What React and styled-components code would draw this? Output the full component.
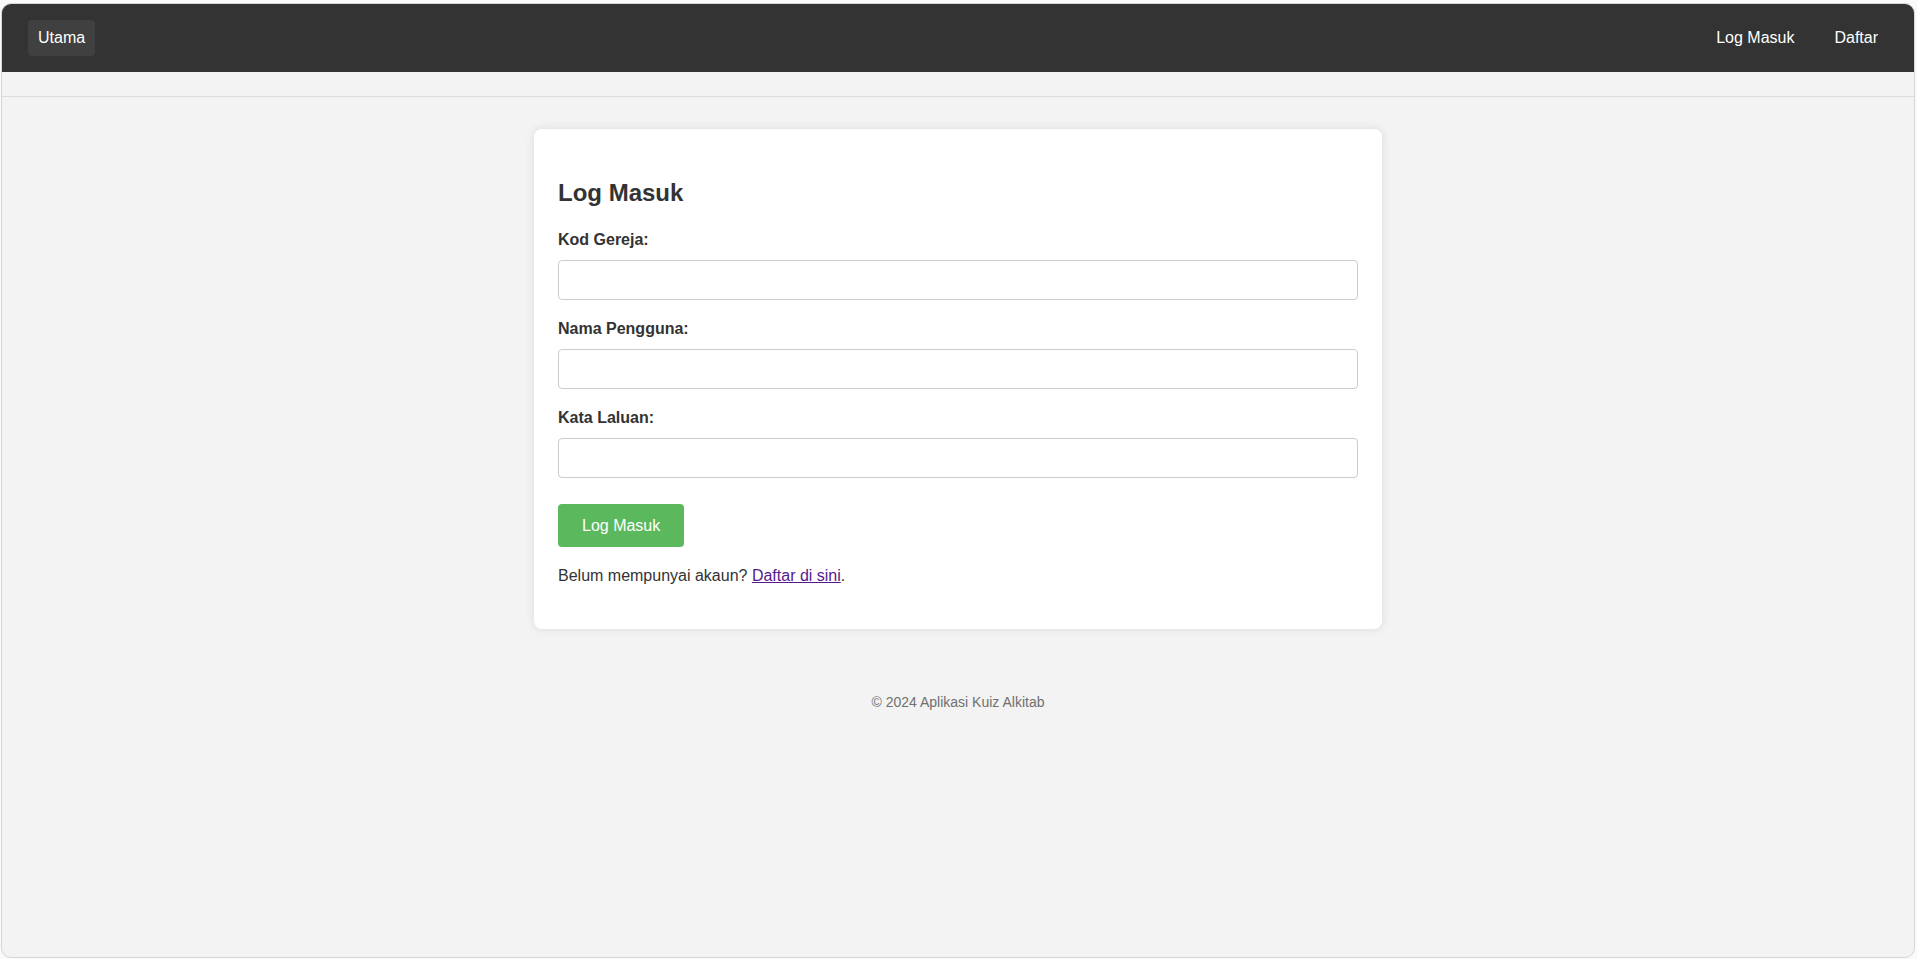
import styled, { createGlobalStyle } from 'styled-components';

const GlobalStyle = createGlobalStyle`
  * {
    box-sizing: border-box;
  }

  html,
  body {
    margin: 0;
    height: 100%;
  }

  body {
    padding: 3px 2px 1px 1px;
    background: #fafafa;
    font-family: 'Liberation Sans', Arial, sans-serif;
    color: #333;
  }

  #root {
    height: 100%;
  }
`;

const Frame = styled.div`
  height: 100%;
  border: 1px solid #d6d6d6;
  border-radius: 10px;
  overflow: hidden;
  background: #f3f3f3;
`;

const NavBar = styled.nav`
  height: 68px;
  padding: 0 26px 0 26px;

  display: flex;
  align-items: center;
  justify-content: space-between;

  background: #333;
`;

const NavGroup = styled.div`
  display: flex;
  align-items: center;
  gap: 20px;
`;

const NavLink = styled.a`
  padding: 9px 10px;

  font-size: 16px;
  line-height: 18px;
  color: #fff;
  text-decoration: none;

  border-radius: 4px;
  background: ${({ active }) => (active ? '#404040' : 'transparent')};
  cursor: pointer;
`;

const SubBar = styled.div`
  height: 25px;
  border-bottom: 1px solid #dcdcdc;
`;

const Main = styled.main`
  padding-top: 32px;
`;

const Card = styled.section`
  width: 848px;
  margin: 0 auto;
  padding: 24px;

  background: #fff;
  border-radius: 8px;
  box-shadow: 0 0 10px rgba(0, 0, 0, 0.1);
`;

const Title = styled.h2`
  margin: 26px 0 24px;

  font-size: 24px;
  font-weight: bold;
  color: #333;
`;

const Field = styled.div`
  margin-bottom: 20px;
`;

const Label = styled.label`
  display: block;
  margin-bottom: 11px;

  font-size: 16px;
  font-weight: bold;
  color: #333;
`;

const Input = styled.input`
  display: block;
  width: 100%;
  height: 40px;
  padding: 10px;

  font-family: inherit;
  font-size: 16px;

  border: 1px solid #ccc;
  border-radius: 4px;
  background: #fff;
  outline: none;
`;

const SubmitBtn = styled.button`
  margin-top: 6px;
  height: 43px;
  padding: 0 24px;

  font-family: inherit;
  font-size: 16px;
  color: #fff;

  background: #5cb85c;
  border: none;
  border-radius: 4px;
  cursor: pointer;
`;

const Note = styled.p`
  margin: 20px 0 20px;

  font-size: 16px;
  color: #333;

  a {
    color: #551a8b;
  }
`;

const Footer = styled.footer`
  margin-top: 65px;

  text-align: center;
  font-size: 14px;
  color: #707070;
`;

const fields = [
  { id: 'kod', label: 'Kod Gereja:', type: 'text' },
  { id: 'nama', label: 'Nama Pengguna:', type: 'text' },
  { id: 'kata', label: 'Kata Laluan:', type: 'password' },
];

const App = () => {
  return (
    <>
      <GlobalStyle />
      <Frame>
        <NavBar>
          <NavGroup>
            <NavLink active>Utama</NavLink>
          </NavGroup>
          <NavGroup>
            <NavLink>Log Masuk</NavLink>
            <NavLink>Daftar</NavLink>
          </NavGroup>
        </NavBar>
        <SubBar />
        <Main>
          <Card>
            <Title>Log Masuk</Title>
            <form onSubmit={(e) => e.preventDefault()}>
              {fields.map(({ id, label, type }) => (
                <Field key={id}>
                  <Label htmlFor={id}>{label}</Label>
                  <Input id={id} type={type} />
                </Field>
              ))}
              <SubmitBtn type="submit">Log Masuk</SubmitBtn>
            </form>
            <Note>
              Belum mempunyai akaun? <a href="#daftar">Daftar di sini</a>.
            </Note>
          </Card>
          <Footer>© 2024 Aplikasi Kuiz Alkitab</Footer>
        </Main>
      </Frame>
    </>
  );
};

export default App;
